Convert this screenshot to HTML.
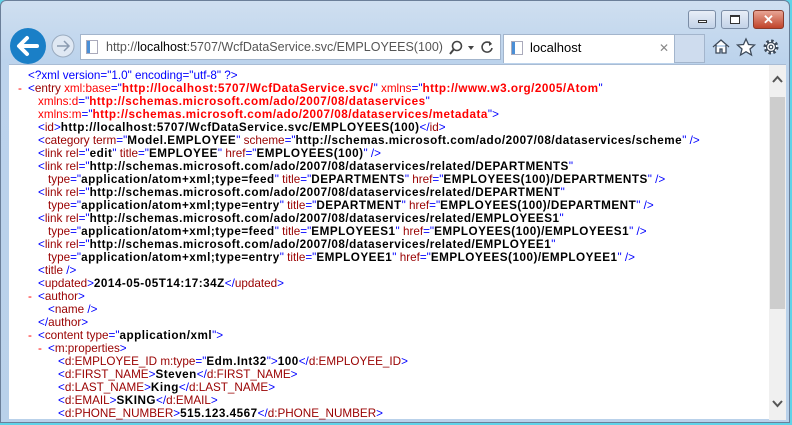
<!DOCTYPE html>
<html><head><meta charset="utf-8"><style>
*{margin:0;padding:0;box-sizing:border-box}
html,body{width:792px;height:425px;overflow:hidden;background:#5fd3e8}
body{font-family:"Liberation Sans",sans-serif;position:relative}
#win{position:absolute;left:0;top:0;width:790px;height:423px;background:linear-gradient(#cfdff0,#bcd3ec 60px,#b9d1ea);border:1px solid #6b7f99;border-radius:6px 6px 0 0}
#content{position:absolute;left:8px;top:63px;width:777px;height:355px;background:#fff;border-top:1px solid #a9bcd4}
.sb{position:absolute;left:760px;top:0;width:17px;height:355px;background:#f0f0f0}
.thumb{position:absolute;left:1px;top:32px;width:15px;height:212px;background:#cdcdcd}
.xml{position:absolute;left:0;top:5px;font-size:11.7px;line-height:12.95px;white-space:pre;color:#000}
.l{position:absolute;height:13px}
.b{color:#00f}.t{color:#990000}.v{font-weight:bold;letter-spacing:.5px}.r{color:#f00}.rv{color:#f00;font-weight:bold;letter-spacing:.5px}
.m{color:#f00;position:absolute}
.btn{position:absolute;top:9px;height:19px;border:1px solid #7b8da6;border-radius:3px;background:linear-gradient(#e8eef7,#c3d3e8)}
</style></head><body>
<div id="win">
<div class="btn" style="left:687px;width:28px"><div style="position:absolute;left:9px;top:9px;width:9px;height:3px;border:1px solid #333;background:#fff"></div></div>
<div class="btn" style="left:720px;width:28px"><div style="position:absolute;left:8px;top:4px;width:10px;height:9px;border:1px solid #333;border-top-width:2px;background:#fff"></div></div>
<div class="btn" style="left:752px;width:31px;background:linear-gradient(#e8a595,#c0442a);border-color:#8a3a2a;color:#fff;font-weight:bold;font-size:13px;text-align:center;line-height:17px">✕</div>
<svg style="position:absolute;left:0;top:20px" width="90" height="45">
<circle cx="62" cy="25" r="11" fill="#dfe8f3" stroke="#9aabbf"/>
<path d="M56 25h11M63 20l5 5-5 5" stroke="#8a9ab0" stroke-width="1.5" fill="none"/>
<circle cx="27" cy="25" r="18" fill="#1a7fc7"/>
<path d="M19 25h17M26 17l-8 8 8 8" stroke="#fff" stroke-width="4" fill="none" stroke-linecap="round" stroke-linejoin="round"/>
</svg>
<div style="position:absolute;left:79px;top:33px;width:421px;height:26px;background:#fff;border:1px solid #a3b5cc;font-size:12.5px;line-height:24px;color:#555">
<div style="position:absolute;left:25px;top:0;width:340px;overflow:hidden;white-space:nowrap">http://<span style="color:#000">localhost</span>:5707/WcfDataService.svc/EMPLOYEES(100)</div>
<div style="position:absolute;left:5px;top:5px;width:12px;height:14px;border:1px solid #aab;background:linear-gradient(90deg,#4a8fd6 3px,#fff 3px)"></div>
<svg style="position:absolute;left:368px;top:5px" width="48" height="16"><circle cx="8" cy="6" r="4.5" fill="none" stroke="#444" stroke-width="1.6"/><path d="M5 9l-4 5" stroke="#444" stroke-width="2"/><path d="M19 6h6l-3 4z" fill="#444"/><path d="M42 4a5 5 0 1 0 1 4" fill="none" stroke="#444" stroke-width="1.6"/><path d="M40 1l3 3-3 2z" fill="#444"/></svg></div>
<div style="position:absolute;left:502px;top:33px;width:172px;height:29px;background:#fff;border:1px solid #a3b5cc;border-bottom:none;font-size:13px;line-height:26px;padding-left:26px">localhost<span style="position:absolute;left:155px;color:#888;font-size:12px">✕</span>
<div style="position:absolute;left:7px;top:6px;width:12px;height:14px;border:1px solid #aab;background:linear-gradient(90deg,#4a8fd6 3px,#fff 3px)"></div></div>
<div style="position:absolute;left:674px;top:33px;width:30px;height:29px;background:#cedcee;border:1px solid #a3b5cc;border-left:none"></div>
<svg style="position:absolute;left:710px;top:36px" width="70" height="20">
<path d="M2 10l8-7 8 7M5 8v8h4v-4h2v4h4v-8" fill="#fff" stroke="#3d4a5a" stroke-width="1.3"/>
<path d="M35 2l2.5 5.5 6 .5-4.5 4 1.5 6-5.5-3.3-5.5 3.3 1.5-6-4.5-4 6-.5z" fill="#fff" stroke="#3d4a5a" stroke-width="1.3"/>
<circle cx="60" cy="10" r="6" fill="#fff" stroke="#3d4a5a" stroke-width="3" stroke-dasharray="2.4 2.3"/><circle cx="60" cy="10" r="4.5" fill="#fff" stroke="#3d4a5a" stroke-width="1.2"/><circle cx="60" cy="10" r="1.8" fill="none" stroke="#3d4a5a" stroke-width="1.2"/>
</svg>
<div id="content">
<div class="sb"><div class="thumb"></div>
<svg style="position:absolute;left:3px;top:10px" width="11" height="8"><path d="M1 7l4.5-5 4.5 5" fill="none" stroke="#555" stroke-width="2"/></svg>
<svg style="position:absolute;left:3px;top:335px" width="11" height="8"><path d="M1 1l4.5 5 4.5-5" fill="none" stroke="#555" stroke-width="2"/></svg></div>
<div class="xml">
<div class="l" style="top:0;left:19px"><span class="b">&lt;?xml version="1.0" encoding="utf-8" ?&gt;</span></div>
<div class="m" style="top:13px;left:9px">-</div>
<div class="l" style="top:13px;left:19px"><span class="b">&lt;</span><span class="t">entry </span><span class="r">xml:base</span><span class="b">="</span><span class="rv">http://localhost:5707/WcfDataService.svc/</span><span class="b">"</span> <span class="r">xmlns</span><span class="b">="</span><span class="rv">http://www.w3.org/2005/Atom</span><span class="b">"</span></div>
<div class="l" style="top:26px;left:29px"><span class="r">xmlns:d</span><span class="b">="</span><span class="rv">http://schemas.microsoft.com/ado/2007/08/dataservices</span><span class="b">"</span></div>
<div class="l" style="top:39px;left:29px"><span class="r">xmlns:m</span><span class="b">="</span><span class="rv">http://schemas.microsoft.com/ado/2007/08/dataservices/metadata</span><span class="b">"&gt;</span></div>
<div class="l" style="top:52px;left:29px"><span class="b">&lt;</span><span class="t">id</span><span class="b">&gt;</span><span class="v">http://localhost:5707/WcfDataService.svc/EMPLOYEES(100)</span><span class="b">&lt;/</span><span class="t">id</span><span class="b">&gt;</span></div>
<div class="l" style="top:65px;left:29px"><span class="b">&lt;</span><span class="t">category term</span><span class="b">="</span><span class="v">Model.EMPLOYEE</span><span class="b">"</span> <span class="t">scheme</span><span class="b">="</span><span class="v">http://schemas.microsoft.com/ado/2007/08/dataservices/scheme</span><span class="b">" /&gt;</span></div>
<div class="l" style="top:78px;left:29px"><span class="b">&lt;</span><span class="t">link rel</span><span class="b">="</span><span class="v">edit</span><span class="b">"</span> <span class="t">title</span><span class="b">="</span><span class="v">EMPLOYEE</span><span class="b">"</span> <span class="t">href</span><span class="b">="</span><span class="v">EMPLOYEES(100)</span><span class="b">" /&gt;</span></div>
<div class="l" style="top:91px;left:29px"><span class="b">&lt;</span><span class="t">link rel</span><span class="b">="</span><span class="v">http://schemas.microsoft.com/ado/2007/08/dataservices/related/DEPARTMENTS</span><span class="b">"</span></div>
<div class="l" style="top:104px;left:39px"><span class="t">type</span><span class="b">="</span><span class="v">application/atom+xml;type=feed</span><span class="b">"</span> <span class="t">title</span><span class="b">="</span><span class="v">DEPARTMENTS</span><span class="b">"</span> <span class="t">href</span><span class="b">="</span><span class="v">EMPLOYEES(100)/DEPARTMENTS</span><span class="b">" /&gt;</span></div>
<div class="l" style="top:117px;left:29px"><span class="b">&lt;</span><span class="t">link rel</span><span class="b">="</span><span class="v">http://schemas.microsoft.com/ado/2007/08/dataservices/related/DEPARTMENT</span><span class="b">"</span></div>
<div class="l" style="top:130px;left:39px"><span class="t">type</span><span class="b">="</span><span class="v">application/atom+xml;type=entry</span><span class="b">"</span> <span class="t">title</span><span class="b">="</span><span class="v">DEPARTMENT</span><span class="b">"</span> <span class="t">href</span><span class="b">="</span><span class="v">EMPLOYEES(100)/DEPARTMENT</span><span class="b">" /&gt;</span></div>
<div class="l" style="top:143px;left:29px"><span class="b">&lt;</span><span class="t">link rel</span><span class="b">="</span><span class="v">http://schemas.microsoft.com/ado/2007/08/dataservices/related/EMPLOYEES1</span><span class="b">"</span></div>
<div class="l" style="top:156px;left:39px"><span class="t">type</span><span class="b">="</span><span class="v">application/atom+xml;type=feed</span><span class="b">"</span> <span class="t">title</span><span class="b">="</span><span class="v">EMPLOYEES1</span><span class="b">"</span> <span class="t">href</span><span class="b">="</span><span class="v">EMPLOYEES(100)/EMPLOYEES1</span><span class="b">" /&gt;</span></div>
<div class="l" style="top:169px;left:29px"><span class="b">&lt;</span><span class="t">link rel</span><span class="b">="</span><span class="v">http://schemas.microsoft.com/ado/2007/08/dataservices/related/EMPLOYEE1</span><span class="b">"</span></div>
<div class="l" style="top:182px;left:39px"><span class="t">type</span><span class="b">="</span><span class="v">application/atom+xml;type=entry</span><span class="b">"</span> <span class="t">title</span><span class="b">="</span><span class="v">EMPLOYEE1</span><span class="b">"</span> <span class="t">href</span><span class="b">="</span><span class="v">EMPLOYEES(100)/EMPLOYEE1</span><span class="b">" /&gt;</span></div>
<div class="l" style="top:195px;left:29px"><span class="b">&lt;</span><span class="t">title</span><span class="b"> /&gt;</span></div>
<div class="l" style="top:208px;left:29px"><span class="b">&lt;</span><span class="t">updated</span><span class="b">&gt;</span><span class="v">2014-05-05T14:17:34Z</span><span class="b">&lt;/</span><span class="t">updated</span><span class="b">&gt;</span></div>
<div class="m" style="top:221px;left:19px">-</div>
<div class="l" style="top:221px;left:29px"><span class="b">&lt;</span><span class="t">author</span><span class="b">&gt;</span></div>
<div class="l" style="top:234px;left:39px"><span class="b">&lt;</span><span class="t">name</span><span class="b"> /&gt;</span></div>
<div class="l" style="top:247px;left:29px"><span class="b">&lt;/</span><span class="t">author</span><span class="b">&gt;</span></div>
<div class="m" style="top:260px;left:19px">-</div>
<div class="l" style="top:260px;left:29px"><span class="b">&lt;</span><span class="t">content type</span><span class="b">="</span><span class="v">application/xml</span><span class="b">"&gt;</span></div>
<div class="m" style="top:273px;left:29px">-</div>
<div class="l" style="top:273px;left:39px"><span class="b">&lt;</span><span class="t">m:properties</span><span class="b">&gt;</span></div>
<div class="l" style="top:286px;left:49px"><span class="b">&lt;</span><span class="t">d:EMPLOYEE_ID m:type</span><span class="b">="</span><span class="v">Edm.Int32</span><span class="b">"&gt;</span><span class="v">100</span><span class="b">&lt;/</span><span class="t">d:EMPLOYEE_ID</span><span class="b">&gt;</span></div>
<div class="l" style="top:299px;left:49px"><span class="b">&lt;</span><span class="t">d:FIRST_NAME</span><span class="b">&gt;</span><span class="v">Steven</span><span class="b">&lt;/</span><span class="t">d:FIRST_NAME</span><span class="b">&gt;</span></div>
<div class="l" style="top:312px;left:49px"><span class="b">&lt;</span><span class="t">d:LAST_NAME</span><span class="b">&gt;</span><span class="v">King</span><span class="b">&lt;/</span><span class="t">d:LAST_NAME</span><span class="b">&gt;</span></div>
<div class="l" style="top:325px;left:49px"><span class="b">&lt;</span><span class="t">d:EMAIL</span><span class="b">&gt;</span><span class="v">SKING</span><span class="b">&lt;/</span><span class="t">d:EMAIL</span><span class="b">&gt;</span></div>
<div class="l" style="top:338px;left:49px"><span class="b">&lt;</span><span class="t">d:PHONE_NUMBER</span><span class="b">&gt;</span><span class="v">515.123.4567</span><span class="b">&lt;/</span><span class="t">d:PHONE_NUMBER</span><span class="b">&gt;</span></div>
</div>
</div>
</div>
</body></html>
